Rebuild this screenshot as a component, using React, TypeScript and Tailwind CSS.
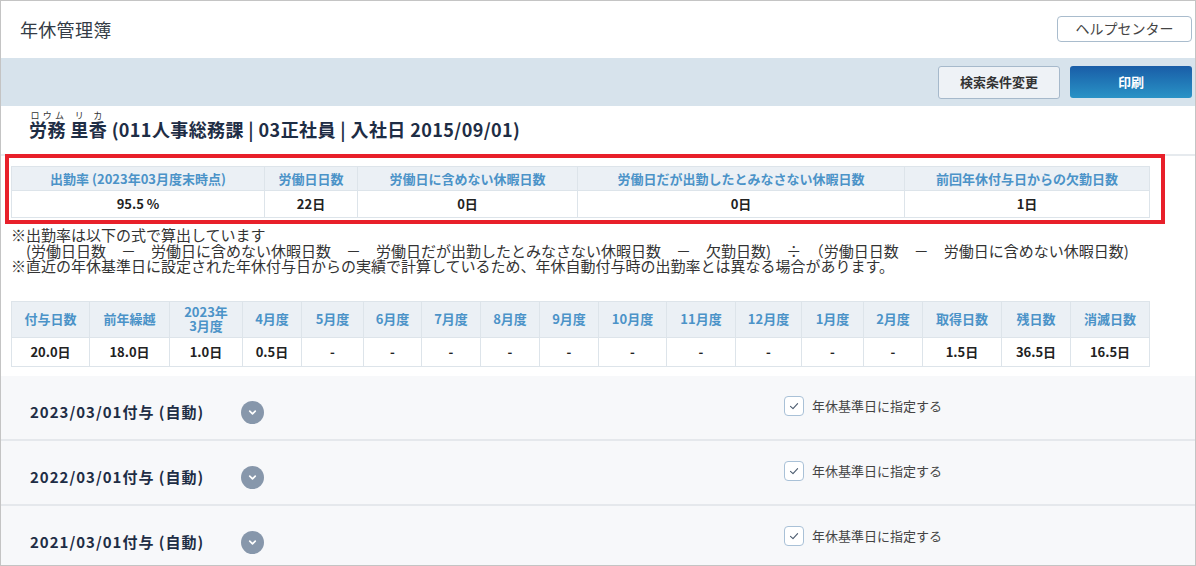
import React from 'react';

const font = { fontFamily: '"Noto Sans CJK JP", "Noto Sans", sans-serif' };

const summaryCols = [
  { label: '出勤率 (2023年03月度末時点)', value: '95.5 %', w: 253 },
  { label: '労働日日数', value: '22日', w: 93 },
  { label: '労働日に含めない休暇日数', value: '0日', w: 220 },
  { label: '労働日だが出勤したとみなさない休暇日数', value: '0日', w: 327 },
  { label: '前回年休付与日からの欠勤日数', value: '1日', w: 245 },
];

const grantCols: { label: React.ReactNode; value: string; w: number }[] = [
  { label: '付与日数', value: '20.0日', w: 78 },
  { label: '前年繰越', value: '18.0日', w: 80 },
  { label: <>2023年<br />3月度</>, value: '1.0日', w: 73 },
  { label: '4月度', value: '0.5日', w: 59 },
  { label: '5月度', value: '-', w: 62 },
  { label: '6月度', value: '-', w: 58 },
  { label: '7月度', value: '-', w: 59 },
  { label: '8月度', value: '-', w: 59 },
  { label: '9月度', value: '-', w: 59 },
  { label: '10月度', value: '-', w: 68 },
  { label: '11月度', value: '-', w: 69 },
  { label: '12月度', value: '-', w: 66 },
  { label: '1月度', value: '-', w: 62 },
  { label: '2月度', value: '-', w: 59 },
  { label: '取得日数', value: '1.5日', w: 79 },
  { label: '残日数', value: '36.5日', w: 69 },
  { label: '消滅日数', value: '16.5日', w: 79 },
];

const grants = ['2023/03/01付与 (自動)', '2022/03/01付与 (自動)', '2021/03/01付与 (自動)'];

function Chevron() {
  return (
    <span className="flex h-[23px] w-[23px] items-center justify-center rounded-full bg-[#8797ab]">
      <svg width="11" height="11" viewBox="0 0 12 12" fill="none">
        <path d="M3 4.5 L6 7.5 L9 4.5" stroke="white" strokeWidth="1.8" strokeLinecap="round" strokeLinejoin="round" />
      </svg>
    </span>
  );
}

function Check() {
  return (
    <span className="flex h-[20px] w-[20px] items-center justify-center rounded-[4px] border-[1.5px] border-[#a9c1d7] bg-white">
      <svg width="12" height="12" viewBox="0 0 12 12" fill="none">
        <path d="M2.5 6.3 L5 8.6 L9.6 3.6" stroke="#4b5b6f" strokeWidth="1.1" strokeLinecap="round" strokeLinejoin="round" />
      </svg>
    </span>
  );
}

export default function App() {
  return (
    <div style={font} className="h-[566px] w-[1196px] overflow-hidden border border-[#c4c4c4] bg-white">
      {/* header */}
      <div className="flex h-[57px] items-center justify-between pl-[19px] pr-[3px]">
        <h1 className="text-[18px] tracking-[0.3px] text-[#343b45]">年休管理簿</h1>
        <button className="mb-[2px] h-[26px] w-[135px] rounded-[4px] border border-[#a9bccd] bg-white text-[14px] text-[#444]">
          ヘルプセンター
        </button>
      </div>

      {/* toolbar */}
      <div className="flex h-[48px] items-center justify-end gap-[10px] bg-[#d7e3ec] pr-[3px]">
        <button className="h-[33px] w-[122px] rounded-[3px] border border-[#a6b9cb] bg-[#eef2f6] text-[13px] font-bold text-[#333]">
          検索条件変更
        </button>
        <button className="h-[32px] w-[122px] rounded-[3px] bg-gradient-to-b from-[#1a5da7] to-[#2a93c6] text-[13px] font-bold text-white">
          印刷
        </button>
      </div>

      {/* employee */}
      <div className="flex h-[48px] items-end pb-[14px] pl-[28px]">
        <p className="text-[18px] font-bold leading-[22px] tracking-[0.4px] text-[#1e2d45]">
          <ruby>労務<rt className="text-[9px] font-normal text-[#333]">ロウム</rt></ruby>{' '}
          <ruby>里香<rt className="text-[9px] font-normal text-[#333]">リカ</rt></ruby>{' '}
          (011人事総務課 | 03正社員 | 入社日 2015/09/01)
        </p>
      </div>

      {/* summary */}
      <div className="relative border-t-2 border-[#e6eaee] pt-[10px]">
        <table className="ml-[10px] table-fixed border-collapse text-[13px] font-bold">
          <colgroup>
            {summaryCols.map((c, i) => (
              <col key={i} style={{ width: c.w }} />
            ))}
          </colgroup>
          <thead>
            <tr className="h-[24px] bg-[#ebf0f5] text-[#4b93c8]">
              {summaryCols.map((c, i) => (
                <th key={i} className="border border-[#dde4ea] font-bold">{c.label}</th>
              ))}
            </tr>
          </thead>
          <tbody>
            <tr className="h-[27px] text-[#222]">
              {summaryCols.map((c, i) => (
                <td key={i} className="border border-[#dde4ea] text-center">{c.value}</td>
              ))}
            </tr>
          </tbody>
        </table>
        <div className="pointer-events-none absolute left-[4px] top-[-2px] h-[70px] w-[1160px] border-4 border-[#e8202a]" />
      </div>

      {/* notes */}
      <div className="mt-[9px] pl-[10px] text-[15px] leading-[15.5px] text-[#333]">
        <p>※出勤率は以下の式で算出しています</p>
        <p>　(労働日日数　－　労働日に含めない休暇日数　－　労働日だが出勤したとみなさない休暇日数　－　欠勤日数)　÷　（労働日日数　－　労働日に含めない休暇日数)</p>
        <p>※直近の年休基準日に設定された年休付与日からの実績で計算しているため、年休自動付与時の出勤率とは異なる場合があります。</p>
      </div>

      {/* grant table */}
      <table className="ml-[10px] mt-[27px] table-fixed border-collapse text-[13px] font-bold">
        <colgroup>
          {grantCols.map((c, i) => (
            <col key={i} style={{ width: c.w }} />
          ))}
        </colgroup>
        <thead>
          <tr className="h-[36px] bg-[#ebf0f5] text-[#4b93c8]">
            {grantCols.map((c, i) => (
              <th key={i} className="border border-[#dde4ea] font-bold leading-[14px]">{c.label}</th>
            ))}
          </tr>
        </thead>
        <tbody>
          <tr className="h-[29px] text-[#222]">
            {grantCols.map((c, i) => (
              <td key={i} className="border border-[#dde4ea] text-center">{c.value}</td>
            ))}
          </tr>
        </tbody>
      </table>

      {/* grant accordions */}
      <div className="mt-[9px] bg-[#f7f8fa]">
        {grants.map((g, i) => (
          <div key={i} className="flex h-[65px] items-start border-b-2 border-[#e5e8ec] pl-[29px]">
            <div className="flex w-[754px] items-center pt-[25px]">
              <span className="w-[211px] text-[15px] font-bold tracking-[1px] text-[#1e2d45]">{g}</span>
              <Chevron />
            </div>
            <label className="flex items-center gap-[8px] pt-[20px] text-[13px] text-[#444]">
              <Check />
              年休基準日に指定する
            </label>
          </div>
        ))}
      </div>
    </div>
  );
}
